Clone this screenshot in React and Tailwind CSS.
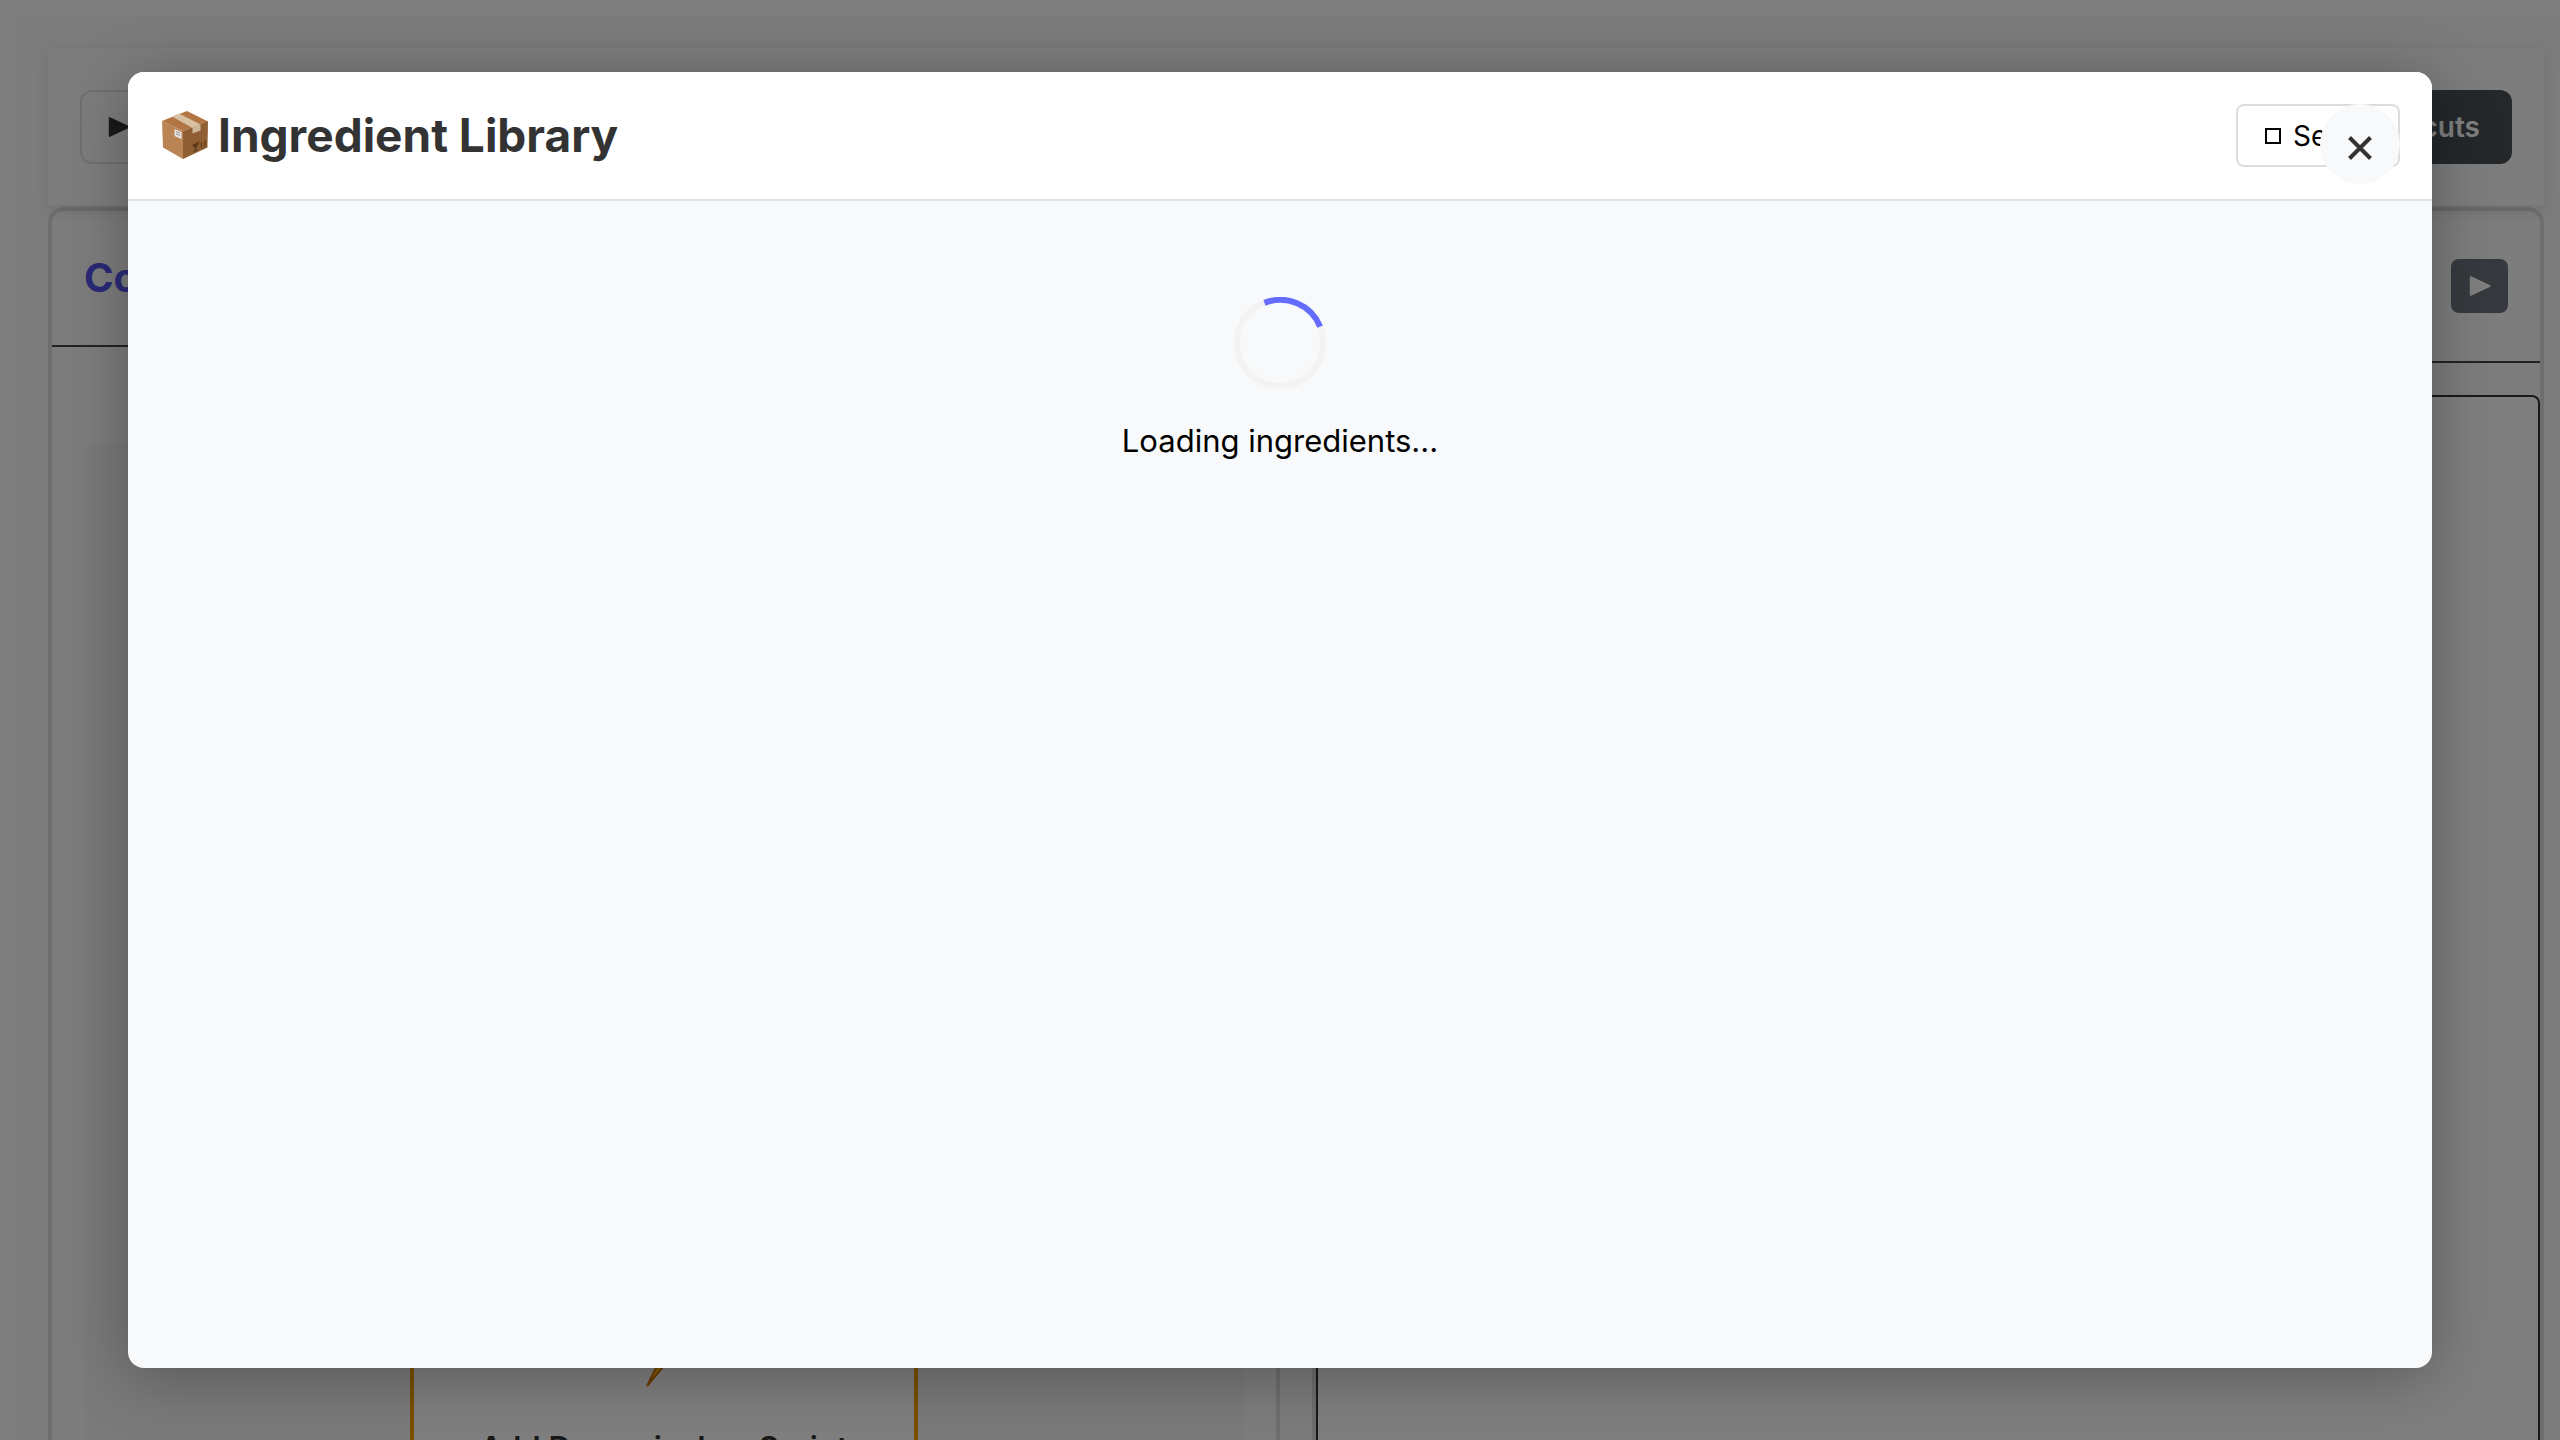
const Play = ({ className }) => (
  <svg viewBox="0 0 22 22" className={className} fill="currentColor" aria-hidden="true">
    <path d="M2 1.2Q.8.6.8 2v18q0 1.4 1.2.8L20.8 12q1.4-1 0-2Z" />
  </svg>
);

const BoxIcon = () => (
  <svg viewBox="0 0 46 48" className="h-12 w-[46px] shrink-0" aria-hidden="true">
    <path d="M0 10 21 20v28L1 36.5Z" fill="#bb8454" />
    <path d="M21 20 46 10l-.5 26.500L21 48Z" fill="#8f5e33" />
    <path d="M0 10 25 0l21 10.500L21 20Z" fill="#b17643" />
    <path d="m10 5.500 7-3L38.500 13.500l-8 3.500Z" fill="#d9c0a2" />
    <path d="m30.500 17 8-3.500v6l-8 3Z" fill="#cfb79b" />
    <path d="m12.500 18 7 3v7l-7-3Z" fill="#e5e5e3" />
    <path d="m14 20.500 4 1.700M14 22.800l4 1.700" stroke="#8c8c8c" strokeWidth="1" />
    <path d="m31 34 5.500-2.500-2 4-1.500 1Zm2.500 2.500v3.500m-2 .5 4-1.600M39.500 31v6M43 29.500v6" stroke="#5d3a18" strokeWidth="1.200" fill="#5d3a18" />
  </svg>
);

export default function App() {
  return (
    <div className="relative h-screen overflow-hidden bg-white font-['Inter',sans-serif] text-black">
      <div className="flex h-full flex-col pl-4 pt-4">
        <div className="flex min-h-0 flex-1 flex-col bg-[#f8f9fa] pl-8 pr-4 pt-8">
          <header className="relative flex h-[159px] shrink-0 items-center justify-between border-b-2 border-[#e9ecef] bg-[#fafafa] px-8 shadow-[0_4px_16px_rgba(0,0,0,0.1)]">
            <button className="flex h-[74px] items-center gap-3 rounded-xl border-2 border-[#e0e0e0] bg-[#fafafa] px-[26px] text-[28px] font-medium text-[#333333]">
              <Play className="size-[22px]" />
              Run
            </button>
            <button className="h-[74px] rounded-xl bg-[#495057] px-8 text-[28px] font-semibold text-white">Shortcuts</button>
          </header>

          <main className="flex min-h-0 flex-1 gap-8">
            <section className="flex w-[1232px] flex-col rounded-t-2xl border-x-4 border-t-4 border-[#dddddd] bg-[#fafafa]">
              <div className="flex h-[136px] shrink-0 items-center border-b-2 border-[#444444] px-8">
                <h2 className="text-[40px] font-bold text-[#5555ee]">Components</h2>
              </div>
              <div className="mx-8 mt-24 flex min-h-0 flex-1 justify-center rounded-t-2xl bg-[#f5f5f5]">
                <div className="flex w-[508px] flex-col items-center justify-end border-x-4 border-[#f59f00] bg-white">
                  <svg viewBox="0 0 60 80" className="h-20 w-[60px] shrink-0" aria-hidden="true">
                    <path d="M46 2 14 42h17L13 78 50 34H34Z" fill="#ffc107" stroke="#d97706" strokeWidth="2" />
                  </svg>
                  <p className="mt-10 h-3 shrink-0 text-[31px] font-semibold leading-10 text-[#333333]">Add Dynamic JavaScript</p>
                </div>
              </div>
            </section>
            <section className="flex flex-1 flex-col rounded-t-2xl border-x-4 border-t-4 border-[#dddddd] bg-[#fafafa]">
              <div className="flex h-[152px] shrink-0 items-center justify-end border-b-2 border-[#444444] px-8">
                <button aria-label="Run preview" className="flex h-[54px] w-[57px] items-center justify-center rounded-lg bg-[#6c757d] text-white">
                  <Play className="size-[22px]" />
                </button>
              </div>
              <div className="mt-8 flex-1 rounded-t-lg border-x-2 border-t-2 border-[#333333] bg-white" />
            </section>
          </main>
        </div>
      </div>

      <div className="absolute inset-0 flex items-center justify-center bg-black/50">
        <div role="dialog" aria-labelledby="library-title" className="flex h-[90%] w-[90%] flex-col overflow-hidden rounded-2xl bg-[#f8f9fb] shadow-[0_8px_64px_rgba(0,0,0,0.3)]">
          <div className="relative flex h-[129px] shrink-0 items-start justify-between border-b-2 border-[#dee2e6] bg-white px-8 pt-8">
            <h1 id="library-title" className="flex items-center gap-2.5 pl-0.5 text-[46px] font-bold leading-[62px] text-[#333333]">
              <BoxIcon />
              Ingredient Library
            </h1>
            <button className="flex h-[63px] w-[164px] items-center gap-3 rounded-lg border-2 border-[#dddddd] bg-white px-[27px] text-[28px]">
              <span className="size-4 shrink-0 border-2 border-black" />
              Select
            </button>
            <button aria-label="Close" className="absolute right-8 top-8 flex size-20 items-center justify-center rounded-full bg-[#f8f9fb] pt-2 text-[#333333]">
              <svg viewBox="0 0 24 24" className="size-6" fill="none" stroke="currentColor" strokeWidth="4" aria-hidden="true">
                <path d="m1.500 1.500 21 21m0-21-21 21" />
              </svg>
            </button>
          </div>
          <div className="flex flex-col items-center pt-24">
            <svg viewBox="0 0 92 92" className="size-[92px]" fill="none" strokeWidth="6" aria-hidden="true">
              <circle cx="46" cy="46" r="43" stroke="#f3f3f3" />
              <path d="M30.500 5.900A43 43 0 0 1 86.100 29.600" stroke="#646cff" />
            </svg>
            <p className="mt-8 text-[31px] leading-10">Loading ingredients...</p>
          </div>
        </div>
      </div>
    </div>
  );
}
